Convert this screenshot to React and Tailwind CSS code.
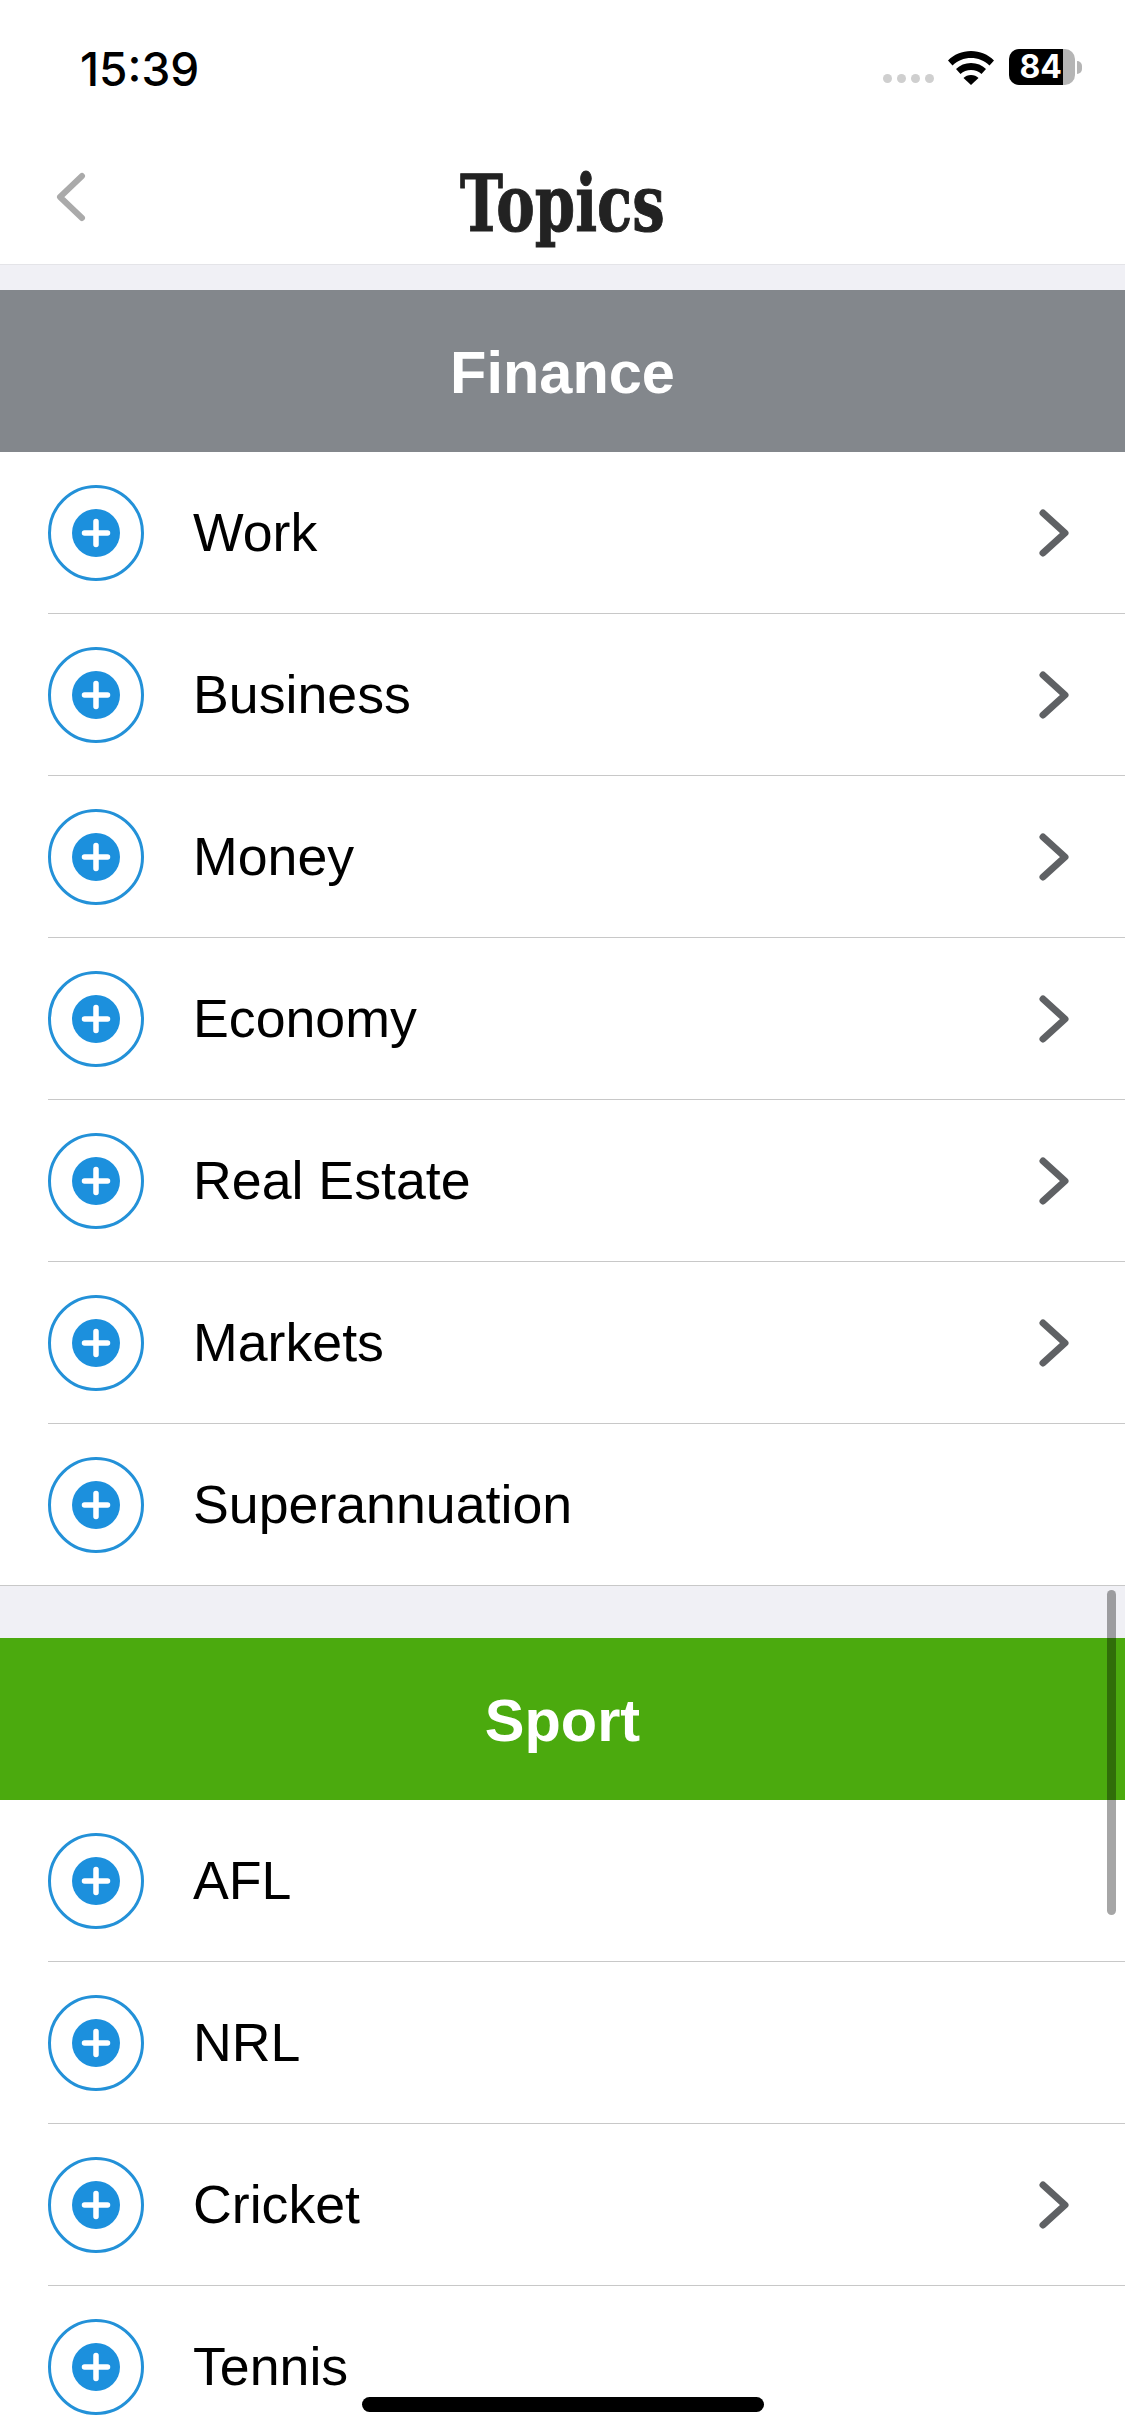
import React from 'react';

const sections = [
  {
    title: 'Finance',
    color: 'bg-[#83878c]',
    gap: 'pt-[25px]',
    rows: [
      { name: 'Work', more: true },
      { name: 'Business', more: true },
      { name: 'Money', more: true },
      { name: 'Economy', more: true },
      { name: 'Real Estate', more: true },
      { name: 'Markets', more: true },
      { name: 'Superannuation', more: false },
    ],
  },
  {
    title: 'Sport',
    color: 'bg-[#4baa0e]',
    gap: 'pt-[52px]',
    rows: [
      { name: 'AFL', more: false },
      { name: 'NRL', more: false },
      { name: 'Cricket', more: true },
      { name: 'Tennis', more: false },
    ],
  },
];

const AddButton = () => (
  <div className="w-[96px] h-[96px] rounded-full border-[3px] border-[#2391d8] flex items-center justify-center shrink-0">
    <svg width="48" height="48" viewBox="0 0 48 48">
      <circle cx="24" cy="24" r="24" fill="#1c90dd" />
      <path d="M24 12.500v23M12.500 24h23" stroke="#fff" strokeWidth="5.500" strokeLinecap="round" />
    </svg>
  </div>
);

const Chevron = () => (
  <svg width="32" height="48" viewBox="0 0 32 48" className="shrink-0 mr-[55px]" fill="none">
    <path d="M5 4l22 20L5 44" stroke="#5f6164" strokeWidth="7" strokeLinecap="round" strokeLinejoin="round" />
  </svg>
);

const StatusIcons = () => (
  <div className="flex items-end gap-[14px] mr-[43px]">
    <div className="flex gap-[5px] mb-[2px]">
      <span className="w-[9px] h-[9px] rounded-full bg-[#cfcfcf]" />
      <span className="w-[9px] h-[9px] rounded-full bg-[#cfcfcf]" />
      <span className="w-[9px] h-[9px] rounded-full bg-[#cfcfcf]" />
      <span className="w-[9px] h-[9px] rounded-full bg-[#cfcfcf]" />
    </div>
    <svg width="46" height="34" viewBox="0 0 46 34" className="mr-[1px]">
      <path d="M23 0C14 0 6 3.5 0 9.5l4.5 5C9.500 9.500 16 7 23 7s13.500 2.500 18.500 7.500l4.500-5C40 3.500 32 0 23 0z" fill="#000" />
      <path d="M23 12c-6 0-11 2.300-15 6l4.500 5c2.800-2.600 6.400-4 10.500-4s7.700 1.400 10.500 4l4.500-5c-4-3.700-9-6-15-6z" fill="#000" />
      <path d="M23 24c-3 0-5.600 1-7.500 3L23 34l7.500-7c-1.900-2-4.500-3-7.500-3z" fill="#000" />
    </svg>
    <div className="flex items-center">
      <div className="w-[66px] h-[36px] rounded-[10px] bg-[#b5b5b5]">
        <div className="w-[54px] h-full rounded-l-[10px] bg-black flex items-center justify-end pr-[1px] text-white text-[32px] font-bold leading-none font-['Inter',sans-serif]">
          84
        </div>
      </div>
      <span className="w-[5px] h-[13px] ml-[2px] rounded-r-full bg-[#b5b5b5]" />
    </div>
  </div>
);

const App = () => {
  return (
    <div className="relative w-[1125px] h-[2436px] overflow-hidden bg-white font-['Liberation_Sans',sans-serif]">
      {/* Status bar */}
      <div className="h-[100px] flex items-start justify-between pt-[49px]">
        <span className="ml-[80px] text-[46px] leading-[40px] font-medium text-black font-['Inter',sans-serif]">15:39</span>
        <StatusIcons />
      </div>

      {/* Nav */}
      <div className="relative h-[165px] flex items-center justify-center border-b border-[#e4e4e8]">
        <svg width="32" height="50" viewBox="0 0 32 50" className="absolute left-[54px] top-[72px]" fill="none">
          <path d="M28 4L6 25l22 21" stroke="#aaaaaa" strokeWidth="6" strokeLinecap="round" strokeLinejoin="round" />
        </svg>
        <h1 className="text-[#222222] text-[78px] leading-none font-bold font-['DejaVu_Serif',serif] scale-x-[0.74] mt-[44px] [-webkit-text-stroke:1px_#222222]">Topics</h1>
      </div>

      {/* Lists */}
      {sections.map((section) => (
        <div key={section.title} className={`bg-[#f0f0f5] ${section.gap}`}>
          <div className={`${section.color} h-[162px] pt-[4px] flex items-center justify-center text-white text-[59.500px] font-bold`}>
            {section.title}
          </div>
          <div className="bg-white pl-[48px]">
            {section.rows.map((row) => (
              <div key={row.name} className="h-[162px] flex items-center border-b border-[#c8c8c8] last:-ml-[48px] last:pl-[48px]">
                <AddButton />
                <span className="ml-[49px] flex-1 text-[53.700px] text-black">{row.name}</span>
                {row.more && <Chevron />}
              </div>
            ))}
          </div>
        </div>
      ))}

      {/* Scroll indicator */}
      <div className="absolute left-[1107px] top-[1590px] w-[9px] h-[325px] rounded-full bg-black/35" />

      {/* Home indicator */}
      <div className="absolute left-[362px] top-[2397px] w-[402px] h-[15px] rounded-full bg-black" />
    </div>
  );
};

export default App;
